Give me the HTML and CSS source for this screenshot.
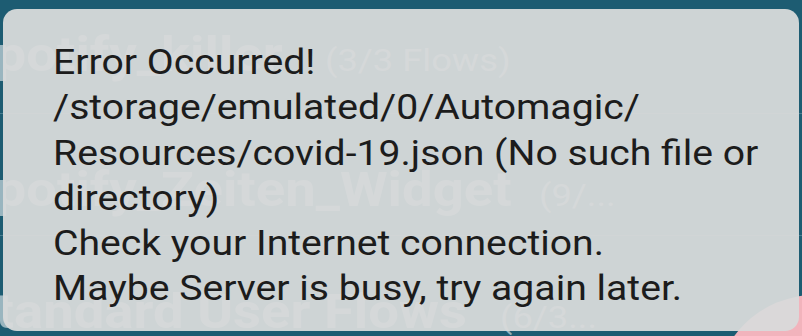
FILE: index.html
```html
<!DOCTYPE html>
<html>
<head>
<meta charset="utf-8">
<link rel="stylesheet" href="styles.css">
</head>
<body>
<div class="screen">
  <ul class="flows">
    <li class="flow"><span class="name">Spotify_killer</span><span class="count">(3/3 Flows)</span></li>
    <li class="flow"><span class="name">Spotify_Zeiten_Widget</span><span class="count">(9/...</span></li>
    <li class="flow"><span class="name">Standard User Flows</span><span class="count">(6/3...</span></li>
  </ul>
  <div class="fab"></div>
  <div class="toast">
    <p class="msg">Error Occurred!<br>/storage/emulated/0/Automagic/<br>Resources/covid-19.json (No such file or directory)<br>Check your Internet connection.<br>Maybe Server is busy, try again later.</p>
  </div>
</div>
</body>
</html>
```
FILE: styles.css
```css
* { box-sizing: border-box; }
html, body { margin: 0; padding: 0; }
body {
  width: 802px;
  height: 336px;
  overflow: hidden;
  background: #1d5c72;
  font-family: Roboto, "Noto Sans", sans-serif;
}
.screen {
  position: relative;
  width: 802px;
  height: 336px;
  overflow: hidden;
}
.flows {
  list-style: none;
  margin: 0;
  padding: 0;
}
.flow {
  height: 122px;
  padding-top: 48px;
  border-bottom: 1px solid #4a7f92;
  white-space: nowrap;
  line-height: 56px;
}
.flow:first-child { height: 114px; padding-top: 27px; }
.name,
.count {
  display: inline-block;
  vertical-align: baseline;
  transform: scaleX(1.135);
  transform-origin: left center;
  color: rgba(255, 255, 255, 0.55);
}
.name {
  margin-left: -38px;
  font-size: 48px;
  font-weight: 700;
}
.count {
  font-size: 32px;
}
.flow:nth-child(1) .count { margin-left: 80px; }
.flow:nth-child(2) .count { margin-left: 93px; }
.flow:nth-child(3) .count { margin-left: 93px; }
.fab {
  position: absolute;
  left: 715px;
  top: 295px;
  width: 200px;
  height: 200px;
  border-radius: 50%;
  background: #f2b3bc;
}
.toast {
  position: absolute;
  left: 3px;
  top: 9px;
  width: 796px;
  height: 322px;
  border-radius: 14px;
  background: rgba(216, 218, 218, 0.95);
  padding: 31px 0 0 50px;
}
.msg {
  margin: 0;
  font-size: 34.5px;
  line-height: 45.3px;
  color: #1c1c1c;
  width: 640px;
  transform: scaleX(1.135);
  transform-origin: left top;
}
```
